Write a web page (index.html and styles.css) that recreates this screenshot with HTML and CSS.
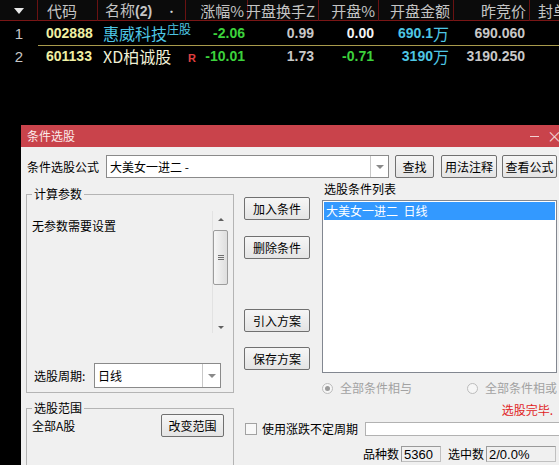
FILE: index.html
```html
<!DOCTYPE html>
<html lang="zh-CN">
  <head>
    <meta charset="UTF-8" />
    <title>条件选股</title>
    <link rel="stylesheet" href="styles.css">
  </head>
  <body>
    <!-- quote board -->
    <div class="quote">
      <div class="qrow head">
        <div class="c idx"><span class="sort-arrow"></span></div>
        <div class="c lt code-h">代码</div>
        <div class="c lt name-h"><span>名称<b class="num">(2)</b></span><span class="dot">•</span></div>
        <div class="c rt">涨幅%</div>
        <div class="c rt">开盘换手Z</div>
        <div class="c rt">开盘%</div>
        <div class="c rt">开盘金额</div>
        <div class="c rt">昨竞价</div>
        <div class="c lt last-h">封单额</div>
      </div>
      <div class="qrow data first">
        <div class="c idx num-plain">1</div>
        <div class="c lt num code">002888</div>
        <div class="c lt name cyan"><span>惠威科技<sup class="tag">庄股</sup></span></div>
        <div class="c rt num green chg"><span>-2.06</span></div>
        <div class="c rt num gray">0.99</div>
        <div class="c rt num white">0.00</div>
        <div class="c rt num cyan">690.1<span class="wan">万</span></div>
        <div class="c rt num gray">690.060</div>
        <div class="c"></div>
      </div>
      <div class="qrow data">
        <div class="c idx num-plain">2</div>
        <div class="c lt num code">601133</div>
        <div class="c lt name pale"><span>XD柏诚股</span></div>
        <div class="c rt num green chg"><span class="flag">R</span><span>-10.01</span></div>
        <div class="c rt num gray">1.73</div>
        <div class="c rt num green">-0.71</div>
        <div class="c rt num cyan">3190<span class="wan">万</span></div>
        <div class="c rt num gray">3190.250</div>
        <div class="c"></div>
      </div>
    </div>

    <!-- condition picker window -->
    <div class="dialog">
      <div class="titlebar">
        <span class="title">条件选股</span>
        <span class="win-min"></span>
        <span class="win-close">×</span>
      </div>
      <div class="dlg-body">
        <div class="formula-row">
          <span class="formula-label">条件选股公式</span>
          <div class="combo formula-combo">
            <span class="combo-text">大美女一进二 -</span>
            <span class="combo-btn"><i class="caret"></i></span>
          </div>
          <button class="btn find-btn">查找</button>
          <button class="btn note-btn">用法注释</button>
          <button class="btn view-btn">查看公式</button>
        </div>

        <div class="main">
          <div class="left-col">
            <fieldset class="group params">
              <legend>计算参数</legend>
              <div class="params-top">
                <span class="params-note">无参数需要设置</span>
                <div class="vscroll">
                  <div class="sb-arrow"><i class="tri-up"></i></div>
                  <div class="sb-thumb"><i></i><i></i><i></i></div>
                  <div class="sb-track"></div>
                  <div class="sb-arrow down"><i class="tri-down"></i></div>
                </div>
              </div>
              <div class="period-row">
                <span class="period-label">选股周期:</span>
                <div class="combo period-combo">
                  <span class="combo-text">日线</span>
                  <span class="combo-btn"><i class="caret"></i></span>
                </div>
              </div>
            </fieldset>

            <fieldset class="group range">
              <legend>选股范围</legend>
              <div class="range-row">
                <span class="range-text">全部A股</span>
                <button class="btn range-btn">改变范围</button>
              </div>
            </fieldset>
          </div>

          <div class="right-area">
            <div class="cond-top">
              <div class="side-btns">
                <button class="btn side-btn">加入条件</button>
                <button class="btn side-btn del">删除条件</button>
                <button class="btn side-btn load">引入方案</button>
                <button class="btn side-btn save">保存方案</button>
              </div>
              <div class="list-col">
                <div class="list-label">选股条件列表</div>
                <div class="cond-list">
                  <div class="cond-item selected">大美女一进二&nbsp;&nbsp;日线</div>
                </div>
              </div>
            </div>

            <div class="radio-row">
              <span class="radio-opt"><i class="radio checked"></i>全部条件相与</span>
              <span class="radio-opt"><i class="radio"></i>全部条件相或</span>
            </div>
            <div class="status">选股完毕.</div>
            <div class="check-row">
              <i class="checkbox"></i>
              <span class="check-label">使用涨跌不定周期</span>
              <span class="text-input"></span>
            </div>
            <div class="stats-row">
              <span>品种数</span>
              <span class="stat-box count">5360</span>
              <span class="stat-gap">选中数</span>
              <span class="stat-box picked">2/0.0%</span>
            </div>
          </div>
        </div>
      </div>
    </div>
  </body>
</html>
```

FILE: styles.css
```css
* {
  box-sizing: border-box;
}

body {
  margin: 0;
  width: 559px;
  height: 465px;
  overflow: hidden;
  background: #000;
  font-family: "Noto Sans CJK SC", sans-serif;
}

/* quote board */

.quote {
  font-family: "Noto Sans CJK SC", sans-serif;
}

.qrow {
  display: grid;
  grid-template-columns: 38px 60px 88px 62px 71px 60px 75px 76px 1fr;
}

.c {
  white-space: nowrap;
  display: flex;
  align-items: center;
}

.lt {
  justify-content: flex-start;
}

.rt {
  justify-content: flex-end;
  padding-right: 5px;
}

.head {
  height: 21px;
  background: #0b0b0b;
  border-bottom: 1px solid #7a1616;
}

.head .c {
  border-right: 1px solid #6a1212;
  color: #c4c4c4;
  font-size: 15px;
  line-height: 20px;
}

.head .rt {
  padding-right: 3px;
}

.head .code-h {
  padding-left: 9px;
}

.head .name-h {
  padding-left: 7px;
  padding-right: 8px;
  justify-content: space-between;
}

.head .name-h b {
  font-size: 14px;
}

.head .dot {
  font-size: 11px;
  color: #d8d8d8;
}

.head .last-h {
  padding-left: 8px;
  border-right: none;
}

.idx {
  justify-content: center;
}

.sort-arrow {
  width: 0;
  height: 0;
  border-left: 5px solid transparent;
  border-right: 5px solid transparent;
  border-top: 6px solid #e8e8e8;
}

.data {
  height: 22px;
}

.data.first {
  height: 23px;
}

.data.first .c:not(.idx) {
  border-bottom: 1px solid #a89a4c;
}

.num {
  font-family: "Liberation Sans", sans-serif;
  font-weight: bold;
  font-size: 14px;
}

.num-plain {
  font-family: "Liberation Sans", sans-serif;
  font-size: 15px;
  color: #c8c8c8;
}

.code {
  padding-left: 8px;
  color: #f0f0a4;
}

.name {
  padding-left: 5px;
  font-size: 16px;
  line-height: 20px;
}

.tag {
  font-size: 12px;
  line-height: 12px;
  vertical-align: 6px;
}

.cyan {
  color: #4ec6e4;
}

.pale {
  color: #f0f0d6;
}

.green {
  color: #3cd23c;
}

.gray {
  color: #c8c8c8;
}

.white {
  color: #f4f4f4;
}

.chg {
  padding-right: 3px;
}

.chg .flag {
  margin-right: auto;
  margin-left: 2px;
  margin-top: 4px;
  font-size: 11px;
  color: #e04040;
}

.wan {
  font-family: "Noto Sans CJK SC", sans-serif;
  font-weight: normal;
  font-size: 16px;
}

/* dialog window */

.dialog {
  margin: 59px 0 0 21px;
  width: 545px;
  font-size: 12px;
  line-height: 16px;
  color: #000;
}

.titlebar {
  height: 22px;
  background: #c9434b;
  display: flex;
  align-items: center;
  padding: 0 4px 0 6px;
  color: #fff;
}

.title {
  color: #fbeaea;
}

.win-min {
  margin-left: auto;
  width: 9px;
  height: 1px;
  background: #f3d0d2;
}

.win-close {
  margin-left: 8px;
  font-size: 15px;
  color: #f3d0d2;
}

.dlg-body {
  background: #f0f0f0;
  height: 320px;
  padding-top: 8px;
}

.btn {
  height: 23px;
  padding: 0;
  font: inherit;
  color: #000;
  background: linear-gradient(#f6f6f6, #e4e4e4);
  border: 1px solid #707070;
  border-radius: 2px;
}

.formula-row {
  display: flex;
  align-items: center;
  height: 23px;
  padding-left: 6px;
}

.formula-label {
  width: 72px;
}

.combo {
  display: flex;
  background: #fff;
  border: 1px solid #8a8a8a;
}

.combo-text {
  flex: 1;
  padding-left: 3px;
  display: flex;
  align-items: center;
}

.combo-btn {
  width: 18px;
  border-left: 1px solid #c8c8c8;
  display: flex;
  align-items: center;
  justify-content: center;
}

.caret {
  width: 0;
  height: 0;
  border-left: 4px solid transparent;
  border-right: 4px solid transparent;
  border-top: 4px solid #8a8a8a;
}

.formula-combo {
  margin-left: 7px;
  width: 283px;
  height: 23px;
}

.find-btn {
  margin-left: 6px;
  width: 39px;
}

.note-btn {
  margin-left: 7px;
  width: 56px;
}

.view-btn {
  margin-left: 5px;
  width: 55px;
}

.main {
  display: flex;
  margin-top: 3px;
}

.left-col {
  margin-left: 5px;
  width: 208px;
}

.group {
  margin: 0;
  padding: 0;
  min-width: 0;
  border: 1px solid #b4b4b4;
}

.group legend {
  margin-left: 5px;
  padding: 0 2px;
  line-height: 16px;
}

.params {
  margin-top: 5px;
}

.params-top {
  display: flex;
  height: 122px;
  margin-top: 9px;
}

.params-note {
  flex: 1;
  padding-left: 5px;
  margin-top: 7px;
}

.vscroll {
  width: 16px;
  margin-right: 5px;
  display: flex;
  flex-direction: column;
  border-left: 1px solid #e2e2e2;
}

.sb-arrow {
  height: 17px;
  display: flex;
  align-items: center;
  justify-content: center;
}

.sb-arrow.down {
  align-items: flex-end;
  padding-bottom: 4px;
}

.tri-up,
.tri-down {
  width: 0;
  height: 0;
  border-left: 3px solid transparent;
  border-right: 3px solid transparent;
}

.tri-up {
  border-bottom: 3px solid #606060;
}

.tri-down {
  border-top: 3px solid #606060;
}

.sb-thumb {
  margin-top: 2px;
  height: 55px;
  border: 1px solid #9c9c9c;
  border-radius: 2px;
  background: linear-gradient(90deg, #f6f6f6, #dedede);
  display: flex;
  flex-direction: column;
  align-items: center;
  justify-content: center;
  gap: 1px;
}

.sb-thumb i {
  width: 6px;
  height: 1px;
  background: #707070;
}

.sb-track {
  flex: 1;
}

.period-row {
  display: flex;
  align-items: center;
  height: 25px;
  margin: 30px 0 4px;
  padding-left: 7px;
}

.period-label {
  width: 53px;
}

.period-combo {
  margin-left: 7px;
  width: 127px;
  height: 25px;
}

.range {
  margin-top: 7px;
  height: 80px;
}

.range-row {
  display: flex;
  align-items: center;
  justify-content: space-between;
  margin-top: -2px;
  padding: 0 9px 0 5px;
}

.range-btn {
  width: 63px;
}

.right-area {
  margin-left: 10px;
  width: 313px;
}

.cond-top {
  display: flex;
}

.side-btns {
  width: 66px;
  display: flex;
  flex-direction: column;
  padding-top: 16px;
}

.side-btn.del {
  margin-top: 16px;
}

.side-btn.load {
  margin-top: 50px;
}

.side-btn.save {
  margin-top: 15px;
}

.list-col {
  margin-left: 12px;
  width: 235px;
}

.list-label {
  padding-left: 2px;
}

.cond-list {
  margin-top: 3px;
  height: 173px;
  background: #fff;
  border: 1px solid #828790;
  padding: 1px;
}

.cond-item {
  height: 18px;
  line-height: 18px;
  padding-left: 2px;
}

.cond-item.selected {
  background: #3399ff;
  color: #fff;
}

.radio-row {
  display: flex;
  justify-content: space-between;
  margin-top: 7px;
  padding-left: 78px;
  color: #a2a2a2;
}

.radio-opt {
  display: flex;
  align-items: center;
  gap: 7px;
  white-space: nowrap;
}

.radio {
  width: 11px;
  height: 11px;
  border-radius: 50%;
  border: 1px solid #bcbcbc;
  background: #f6f6f6;
  display: flex;
  align-items: center;
  justify-content: center;
}

.radio.checked::after {
  content: "";
  width: 5px;
  height: 5px;
  border-radius: 50%;
  background: #9a9a9a;
}

.status {
  margin-top: 6px;
  text-align: right;
  padding-right: 4px;
  color: #e01e1e;
}

.check-row {
  display: flex;
  align-items: center;
  height: 16px;
  margin-top: 3px;
}

.checkbox {
  margin-left: 1px;
  width: 12px;
  height: 12px;
  flex-shrink: 0;
  border: 1px solid #a2a2a2;
  background: #f8f8f8;
}

.check-label {
  margin-left: 5px;
  white-space: nowrap;
  flex-shrink: 0;
}

.text-input {
  margin-left: 7px;
  width: 200px;
  height: 14px;
  flex-shrink: 0;
  background: #fff;
  border: 1px solid #b2b2b2;
}

.stats-row {
  display: flex;
  align-items: center;
  height: 16px;
  margin-top: 9px;
  padding-left: 119px;
}

.stat-box {
  margin-left: 2px;
  height: 16px;
  padding-left: 2px;
  font-family: "Liberation Sans", sans-serif;
  font-size: 13px;
  line-height: 15px;
  border: 1px solid #c0c0c0;
  border-top-color: #9a9a9a;
  border-left-color: #9a9a9a;
}

.stat-box.count {
  width: 40px;
}

.stat-box.picked {
  width: 70px;
}

.stat-gap {
  margin-left: 7px;
}
```
